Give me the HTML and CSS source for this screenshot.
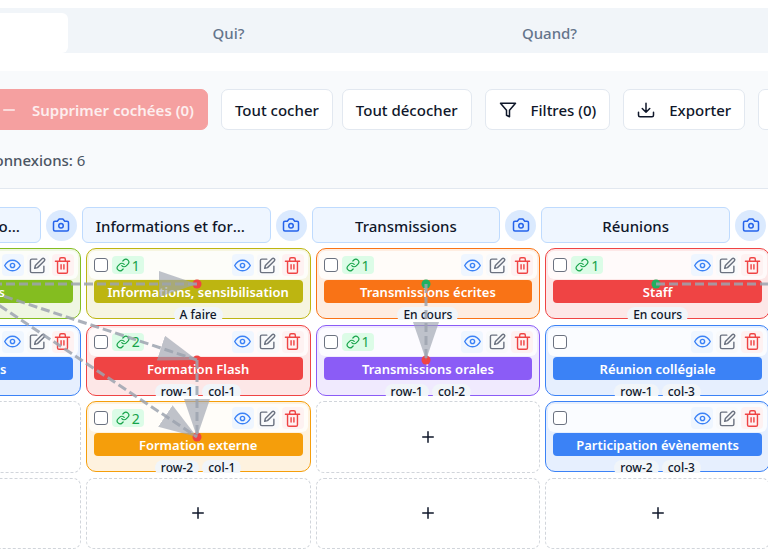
FILE: index.html
```html
<!DOCTYPE html>
<html lang="fr">
<head>
    <meta charset="UTF-8">
    <meta name="viewport" content="width=device-width, initial-scale=1.0">
    <title>Connexions</title>
    <link rel="stylesheet" href="styles.css">
</head>
<body>
    <!-- icônes -->
    <svg class="sprite" aria-hidden="true">
        <symbol id="minus" viewBox="0 0 24 24"><path d="M5 12h14"/></symbol>
        <symbol id="plus" viewBox="0 0 24 24"><path d="M5 12h14M12 5v14"/></symbol>
        <symbol id="filter" viewBox="0 0 24 24"><path d="M22 3H2l8 9.46V19l4 2v-8.54L22 3z"/></symbol>
        <symbol id="download" viewBox="0 0 24 24"><path d="M22 15v4a2 2 0 0 1-2 2H4a2 2 0 0 1-2-2v-4M7 10l5 5 5-5M12 15V3"/></symbol>
        <symbol id="camera" viewBox="0 0 24 24"><path d="M14.5 4h-5L7 7H4a2 2 0 0 0-2 2v9a2 2 0 0 0 2 2h16a2 2 0 0 0 2-2V9a2 2 0 0 0-2-2h-3l-2.500-3z"/><circle cx="12" cy="13" r="3"/></symbol>
        <symbol id="link" viewBox="0 0 24 24"><path d="M10 13a5 5 0 0 0 7.540.540l3-3a5 5 0 0 0-7.070-7.070l-1.720 1.710"/><path d="M14 11a5 5 0 0 0-7.540-.540l-3 3a5 5 0 0 0 7.070 7.070l1.710-1.710"/></symbol>
        <symbol id="eye" viewBox="0 0 24 24"><path d="M1 12s4-7.500 11-7.500S23 12 23 12s-4 7.500-11 7.500S1 12 1 12z"/><circle cx="12" cy="12" r="3"/></symbol>
        <symbol id="edit" viewBox="0 0 24 24"><path d="M11 3H4a2 2 0 0 0-2 2v15a2 2 0 0 0 2 2h15a2 2 0 0 0 2-2v-7"/><path d="M18.500 2.500a2.120 2.120 0 0 1 3 3L12 15l-4 1 1-4 9.500-9.500z"/></symbol>
        <symbol id="trash" viewBox="0 0 24 24"><path d="M2 6h20M19 6v15a2 2 0 0 1-2 2H7a2 2 0 0 1-2-2V6M8 6V3a2 2 0 0 1 2-2h4a2 2 0 0 1 2 2v3M10 11v6M14 11v6"/></symbol>
    </svg>

    <nav class="tabs">
        <button class="tab active" aria-label="Quoi?"></button>
        <button class="tab">Qui?</button>
        <button class="tab">Quand?</button>
    </nav>

    <div class="toolbar">
        <div class="actions">
            <button class="btn btn_delete"><svg class="icon"><use href="#minus"/></svg>Supprimer cochées (0)</button>
            <div class="btn_group">
                <button class="btn">Tout cocher</button>
                <button class="btn">Tout décocher</button>
            </div>
            <button class="btn"><svg class="icon"><use href="#filter"/></svg>Filtres (0)</button>
            <button class="btn"><svg class="icon"><use href="#download"/></svg>Exporter</button>
            <button class="btn btn_more" aria-label="Plus"></button>
        </div>
        <p class="stats"><b>Connexions:</b> 6</p>
    </div>

    <div class="heads"></div>
    <div class="board">
        <div class="grid"></div>
        <!-- flèches entre les cartes -->
        <svg class="links" aria-hidden="true">
            <defs>
                <marker id="arrow" markerUnits="userSpaceOnUse" markerWidth="38" markerHeight="26" refX="38" refY="13" orient="auto">
                    <path class="arrow" d="M0 0L38 13L0 26z"/>
                </marker>
            </defs>
            <g class="dots">
                <circle class="to" cx="341" cy="36" r="4.500"/>
                <circle class="to" cx="341" cy="112" r="4.500"/>
                <circle class="to" cx="341" cy="189" r="4.500"/>
                <circle class="from" cx="570" cy="36" r="4.500"/>
                <circle class="to" cx="570" cy="112" r="4.500"/>
                <circle class="from" cx="800" cy="36" r="4.500"/>
            </g>
            <path class="line" d="M111 36H341"/>
            <path class="line" d="M111 36L341 112"/>
            <path class="line" d="M111 36L341 189"/>
            <path class="line" d="M341 112V189"/>
            <path class="line" d="M570 36V112"/>
            <path class="line" d="M800 36H1030"/>
        </svg>
    </div>

<script>
    //colonnes du tableau
    var heads = ["Entretien patient commun", "Informations et formations", "Transmissions", "Réunions"];

    //cartes, ligne par ligne (null = case vide)
    var cards = [
        {title:"Évaluations", color:"lime", links:3, tags:["A faire"]},
        {title:"Informations, sensibilisation", color:"olive", links:1, tags:["A faire"]},
        {title:"Transmissions écrites", color:"orange", links:1, tags:["En cours"]},
        {title:"Staff", color:"red", links:1, tags:["En cours"]},

        {title:"Consultants", color:"blue", links:0, tags:["row-1"]},
        {title:"Formation Flash", color:"red", links:2, tags:["row-1", "col-1"]},
        {title:"Transmissions orales", color:"purple", links:1, tags:["row-1", "col-2"]},
        {title:"Réunion collégiale", color:"blue", links:0, tags:["row-1", "col-3"]},

        null,
        {title:"Formation externe", color:"amber", links:2, tags:["row-2", "col-1"]},
        null,
        {title:"Participation évènements", color:"blue", links:0, tags:["row-2", "col-3"]},

        null, null, null, null
    ];

    function icon(name){
        return "<svg class='icon'><use href='#" + name + "'/></svg>";
    }

    var html = "";
    for(var i = 0; i < heads.length; i++){
        html += "<div class='head'><h2 class='head_title'>" + heads[i] + "</h2>"
            + "<button class='head_photo' aria-label='Photo'>" + icon("camera") + "</button></div>";
    }
    document.querySelector(".heads").innerHTML = html;

    html = "";
    for(var i = 0; i < cards.length; i++){
        var c = cards[i];
        //case vide : bouton d'ajout
        if(c == null){
            html += "<button class='cell empty' aria-label='Ajouter'>" + icon("plus") + "</button>";
            continue;
        }
        html += "<div class='cell'><div class='card " + c.color + "'><div class='card_bar'>"
            + "<input type='checkbox' class='check' aria-label='" + c.title + "'>";
        if(c.links > 0){
            html += "<span class='badge'>" + icon("link") + c.links + "</span>";
        }
        html += "<div class='tools'>"
            + "<button class='tool view' aria-label='Voir'>" + icon("eye") + "</button>"
            + "<button class='tool edit' aria-label='Modifier'>" + icon("edit") + "</button>"
            + "<button class='tool del' aria-label='Supprimer'>" + icon("trash") + "</button>"
            + "</div></div><h3 class='card_title'>" + c.title + "</h3><div class='tags'>";
        for(var j = 0; j < c.tags.length; j++){
            html += "<span class='tag'>" + c.tags[j] + "</span>";
        }
        html += "</div></div></div>";
    }
    document.querySelector(".grid").innerHTML = html;
</script>
</body>
</html>
```

FILE: styles.css
```css
*{
    margin: 0px;
    padding: 0px;
    box-sizing: border-box;
}
body{
    background: #ffffff;
    color: #0f172a;
    font-family: "Noto Sans", "Open Sans", sans-serif;
    font-size: 15px;
    overflow: hidden;
}
button{
    font: inherit;
    color: inherit;
    border: none;
    cursor: pointer;
}
.sprite{
    display: none;
}
.icon{
    width: 18px;
    height: 18px;
    flex: none;
    fill: none;
    stroke: currentColor;
    stroke-width: 2;
    stroke-linecap: round;
    stroke-linejoin: round;
}

/* onglets */
.tabs{
    display: grid;
    grid-template-columns: repeat(3, 1fr);
    height: 45px;
    margin: 8px 0px 18px -253px;
    padding: 5px 58px 0px 0px;
    background: #f1f5f9;
}
.tab{
    background: none;
    color: #64748b;
    font-weight: 500;
    border-radius: 6px;
}
.tab.active{
    background: #ffffff;
}

/* barre d'outils */
.toolbar{
    height: 118px;
    padding-top: 18px;
    background: #f8fafc;
    border-bottom: 1px solid #e2e8f0;
}
.actions{
    display: flex;
    gap: 13px;
    margin-left: -14px;
}
.btn_group{
    display: flex;
    gap: 9px;
}
.btn{
    display: flex;
    align-items: center;
    gap: 14px;
    height: 41px;
    padding: 0px 13px;
    white-space: nowrap;
    font-weight: 500;
    background: #ffffff;
    border: 1px solid #e2e8f0;
    border-radius: 7px;
}
.btn_delete{
    color: #fdeeee;
    background: #f5a0a0;
    border-color: #f5a0a0;
    font-weight: 600;
}
.btn_more{
    width: 120px;
}
.stats{
    margin: 19px 0px 0px -15px;
    line-height: 22px;
    color: #4b5563;
}
.stats b{
    font-weight: 500;
}

/* titres des colonnes */
.heads{
    display: grid;
    grid-template-columns: repeat(4, 1fr);
    gap: 5px;
    margin: 18px 2px 5px -148px;
}
.head{
    display: flex;
    align-items: center;
    gap: 5px;
    min-width: 0px;
}
.head_title{
    flex: 1;
    min-width: 0px;
    height: 36px;
    line-height: 36px;
    padding: 0px 13px;
    font-size: 15px;
    font-weight: 500;
    text-align: center;
    white-space: nowrap;
    overflow: hidden;
    text-overflow: ellipsis;
    background: #eff6ff;
    border: 1px solid #bfdbfe;
    border-radius: 6px;
}
.head_photo{
    display: flex;
    align-items: center;
    justify-content: center;
    width: 31px;
    height: 31px;
    color: #2563eb;
    background: #dbeafe;
    border-radius: 50%;
}

/* tableau */
.board{
    position: relative;
    margin: 0px -2px 0px -144px;
}
.grid{
    display: grid;
    grid-template-columns: repeat(4, 1fr);
    grid-auto-rows: 1fr;
    gap: 5px;
    min-height: 301px;
}
.cell{
    height: 100%;
    overflow: hidden;
}
.empty{
    display: flex;
    align-items: center;
    justify-content: center;
    background: #ffffff;
    border: 1px dashed #d1d5db;
    border-radius: 8px;
}
.card{
    height: 71px;
    padding: 2px;
    background: color-mix(in srgb, var(--c) 13%, white);
    border: 1px solid var(--c);
    border-radius: 10px;
}
.lime{ --c: #84bd20; }
.olive{ --c: #bdb511; }
.orange{ --c: #f97316; }
.red{ --c: #ef4444; }
.blue{ --c: #3b82f6; }
.purple{ --c: #8b5cf6; }
.amber{ --c: #f59e0b; }
.card_bar{
    display: flex;
    align-items: center;
    gap: 4px;
    height: 28px;
    padding: 0px 4px 0px 5px;
    background: rgba(255, 255, 255, 0.8);
    border-radius: 6px;
}
.check{
    appearance: none;
    width: 14px;
    height: 14px;
    background: #ffffff;
    border: 1px solid #6b7280;
    border-radius: 3px;
}
.badge{
    display: flex;
    align-items: center;
    gap: 2px;
    height: 18px;
    padding: 0px 4px;
    font-size: 14px;
    color: #16a34a;
    background: #dcfce7;
    border-radius: 4px;
}
.badge .icon{
    width: 14px;
    height: 14px;
}
.tools{
    display: flex;
    gap: 3px;
    margin-left: auto;
}
.tool{
    display: flex;
    align-items: center;
    justify-content: center;
    width: 22px;
    height: 22px;
    border-radius: 4px;
}
.tool .icon{
    width: 17px;
    height: 17px;
}
.view{
    color: #3b82f6;
    background: #eff6ff;
}
.edit{
    color: #6b7280;
    background: #f9fafb;
}
.del{
    color: #ef4444;
    background: #fef2f2;
}
.card_title{
    height: 23px;
    line-height: 24px;
    margin: 1px 5px 4px;
    font-size: 13px;
    font-weight: 600;
    text-align: center;
    white-space: nowrap;
    color: #ffffff;
    background: var(--c);
    border-radius: 4px;
}
.tags{
    display: flex;
    justify-content: center;
    gap: 3px;
}
.tag{
    padding: 0px 6px;
    line-height: 16px;
    font-size: 12px;
    font-weight: 500;
    background: #f1f5f9;
    border-radius: 8px;
}

/* flèches */
.links{
    position: absolute;
    top: 0px;
    left: 0px;
    width: 100%;
    height: 100%;
    pointer-events: none;
}
.line{
    fill: none;
    stroke: #9ca3af;
    stroke-opacity: 0.85;
    stroke-width: 3;
    stroke-dasharray: 9 4;
    marker-end: url(#arrow);
}
.arrow{
    fill: #9ca3af;
    fill-opacity: 0.65;
}
.from{
    fill: #22b060;
}
.to{
    fill: #ef4444;
}
```
